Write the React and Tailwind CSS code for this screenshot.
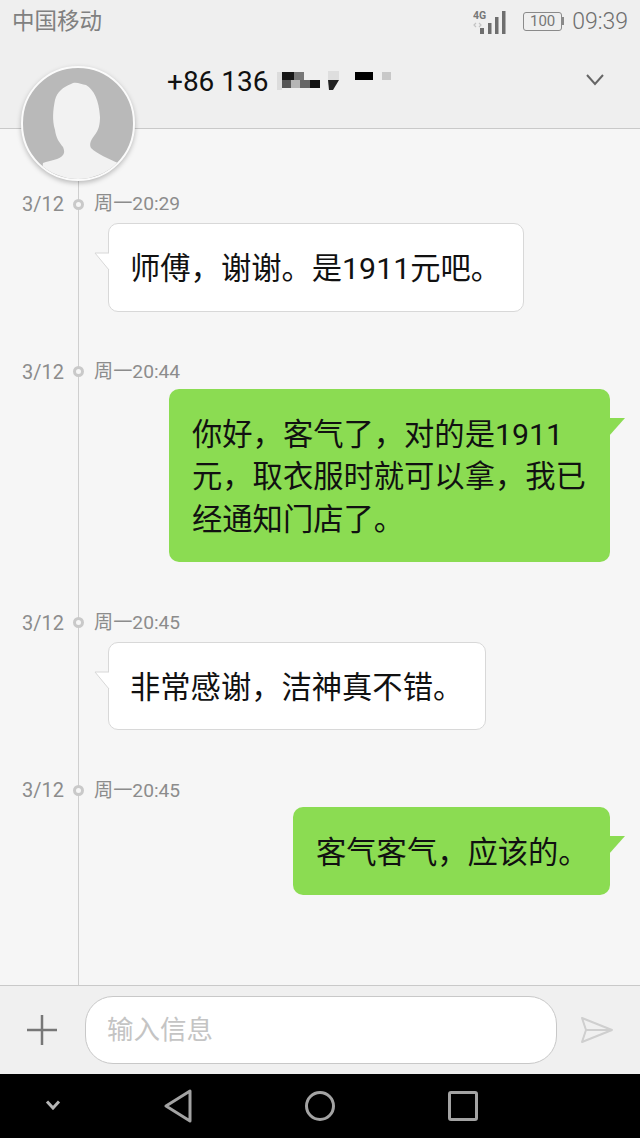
const messages = [
  { id: 1, date: '3/12', time: '周一20:29', side: 'left', width: 'w-[416px]', gap: 'mb-[48px]', lines: ['师傅，谢谢。是1911元吧。'] },
  { id: 2, date: '3/12', time: '周一20:44', side: 'right', width: 'w-[441px]', gap: 'mb-[49px]', lines: ['你好，客气了，对的是1911', '元，取衣服时就可以拿，我已', '经通知门店了。'] },
  { id: 3, date: '3/12', time: '周一20:45', side: 'left', width: 'w-[378px]', gap: 'mb-[48px]', lines: ['非常感谢，洁神真不错。'] },
  { id: 4, date: '3/12', time: '周一20:45', side: 'right', width: 'w-[317px]', gap: 'mb-[48px]', lines: ['客气客气，应该的。'] },
]

function StatusIcons() {
  return (
    <div className="flex items-center">
      <svg width="40" height="26" viewBox="0 0 40 26" className="mr-[10px]">
        <text x="0" y="11" fontSize="10.5" fontWeight="700" fontFamily="Roboto, sans-serif" fill="#777">4G</text>
        <path d="M3 15 l-2 2 2 2 M6 15 l2 2 -2 2" fill="none" stroke="#c4c4c4" strokeWidth="1.2" />
        <rect x="7" y="20" width="4" height="6" fill="#6e6e6e" />
        <rect x="15" y="15" width="3.5" height="11" fill="#6e6e6e" />
        <rect x="22" y="9" width="3.5" height="17" fill="#6e6e6e" />
        <rect x="29" y="3" width="3.5" height="23" fill="#6e6e6e" />
      </svg>
      <div className="flex items-center mr-[8px]">
        <div className="w-[39px] h-[19px] border border-[#8a8a8a] rounded-[3px] flex items-center justify-center text-[15px] leading-none text-[#777]">100</div>
        <div className="w-[2px] h-[8px] bg-[#8a8a8a]" />
      </div>
    </div>
  )
}

function Avatar() {
  return (
    <div className="absolute left-[21px] top-[66px] w-[114px] h-[115px] rounded-full bg-[#b9b9b9] border-2 border-[#fbfbfb] shadow-[0_2px_5px_rgba(0,0,0,0.25)] overflow-hidden z-10">
      <svg width="110" height="111" viewBox="0 0 110 111">
        <path
          d="M48 16 C52 13 58 16 63 17 C71 22 76 32 77 49 C77 56 76 62 71 68 C68 72 66 76 68 80 C74 86 86 91 95 95 L95 111 L18 111 L20 95 C28 92 36 92 40 87 C42 84 41 82 40 79 C36 74 33 70 32 62 C29 52 30 42 32 32 C34 24 40 19 48 16 Z"
          fill="#f2f2f2"
        />
      </svg>
    </div>
  )
}

function Mosaic() {
  return (
    <svg width="122" height="34" viewBox="0 0 122 34" className="ml-[3px]">
      <rect x="5" y="12" width="5" height="18" fill="#dcdcdc" />
      <rect x="10" y="12" width="12" height="8" fill="#161616" />
      <rect x="22" y="12" width="10" height="8" fill="#777" />
      <rect x="10" y="20" width="9" height="8" fill="#555" />
      <rect x="19" y="20" width="9" height="8" fill="#b5b5b5" />
      <rect x="28" y="20" width="10" height="8" fill="#666" />
      <rect x="38" y="20" width="10" height="8" fill="#111" />
      <rect x="56" y="11" width="11" height="9" fill="#dedede" />
      <path d="M56 20 H67 L61 30 H57 Z" fill="#222" />
      <rect x="83" y="12" width="18" height="8" fill="#000" />
      <rect x="110" y="12" width="9" height="8" fill="#c8c8c8" />
    </svg>
  )
}

function Bubble({ msg }) {
  const isLeft = msg.side === 'left'
  return (
    <div className={isLeft ? 'pl-[108px] mt-[7px] flex' : 'pl-[169px] mt-[5px] flex justify-end pr-[30px]'}>
      <div
        className={
          'relative rounded-[10px] text-[30.3px] leading-[42.67px] text-[#111] whitespace-nowrap ' +
          msg.width + ' ' +
          (isLeft ? 'pl-[21px] pr-[22px] pt-[24px] pb-[20px] bg-white border border-[#d8d8d8]' : 'px-[23px] pt-[25px] pb-[20px] bg-[#8bdc52]')
        }
      >
        {msg.lines.map((l) => <div key={l}>{l}</div>)}
        {isLeft ? (
          <svg width="16" height="20" viewBox="0 0 16 20" className="absolute left-[-15px] top-[28px]">
            <path d="M16 1 H1 L16 19 Z" fill="#fff" />
            <path d="M15 1 H1 L15 18" fill="none" stroke="#d8d8d8" />
          </svg>
        ) : (
          <svg width="16" height="20" viewBox="0 0 16 20" className="absolute right-[-15px] top-[29px]">
            <path d="M0 0 H16 L0 18 Z" fill="#8bdc52" />
          </svg>
        )}
      </div>
    </div>
  )
}

function Message({ msg }) {
  return (
    <div className={msg.gap}>
      <div className="flex items-center h-[24px] leading-none text-[#8c8c8c]">
        <div className="w-[73px] pl-[22px] text-[20px]">{msg.date}</div>
        <div className="w-[11px] h-[11px] rounded-full border-[3px] border-[#c9c9c9] bg-[#f6f6f6] z-[1]" />
        <div className="ml-[10px] text-[19.2px]">{msg.time}</div>
      </div>
      <Bubble msg={msg} />
    </div>
  )
}

export default function App() {
  return (
    <div
      className="relative w-[640px] h-[1138px] flex flex-col overflow-hidden bg-[#f6f6f6]"
      style={{ fontFamily: 'Roboto, "Noto Sans CJK SC", sans-serif' }}
    >
      {/* Header */}
      <div className="h-[129px] shrink-0 bg-[#efefef] border-b border-[#c9c9c9]">
        <div className="flex items-center justify-between h-[42px] pl-[12px] pr-[12px]">
          <span className="text-[22.5px] leading-none text-[#808080]">中国移动</span>
          <div className="flex items-center">
            <StatusIcons />
            <span className="text-[23px] leading-none font-light text-[#6e6e6e]">09:39</span>
          </div>
        </div>
        <div className="flex items-start justify-between pl-[167px] pr-[35px] pt-[18px]">
          <div className="flex items-start">
            <span className="text-[28px] leading-[44px] text-[#111]">+86 136</span>
            <Mosaic />
          </div>
          <svg width="20" height="14" viewBox="0 0 20 14" className="mt-[13px]">
            <path d="M2 2 L10 11 L18 2" fill="none" stroke="#666" strokeWidth="2" />
          </svg>
        </div>
      </div>
      <Avatar />

      {/* Conversation */}
      <div className="relative flex-1 pt-[63px]">
        <div className="absolute left-[78px] top-0 bottom-0 w-px bg-[#cfcfcf]" />
        {messages.map((m) => <Message key={m.id} msg={m} />)}
      </div>

      {/* Input */}
      <div className="h-[89px] shrink-0 bg-[#f0f0f0] border-t border-[#c9c9c9] flex items-center pl-[26px]">
        <svg width="32" height="32" viewBox="0 0 32 32">
          <path d="M1 16 H31 M16 1 V31" stroke="#777" strokeWidth="2.5" />
        </svg>
        <div className="w-[472px] h-[68px] ml-[27px] rounded-[28px] bg-white border border-[#c8c8c8] flex items-center pl-[21px] text-[26.5px] text-[#c4c4c4]">
          输入信息
        </div>
        <svg width="34" height="28" viewBox="0 0 34 28" className="ml-[23px]">
          <path d="M2 2 L32 14 L2 26 L6 14 Z M6 14 H32" fill="none" stroke="#cfcfcf" strokeWidth="2" strokeLinejoin="round" />
        </svg>
      </div>

      {/* Navigation bar */}
      <div className="h-[64px] shrink-0 bg-black flex items-center pl-[45px]">
        <svg width="16" height="10" viewBox="0 0 16 10" className="mt-[-2px]">
          <path d="M2 1.5 L8 8 L14 1.5" fill="none" stroke="#b5b5b5" strokeWidth="3" />
        </svg>
        <svg width="30" height="34" viewBox="0 0 30 34" className="ml-[102px]">
          <path d="M27 2 V32 L3 17 Z" fill="none" stroke="#a3a3a3" strokeWidth="3" strokeLinejoin="round" />
        </svg>
        <svg width="32" height="32" viewBox="0 0 32 32" className="ml-[111px]">
          <circle cx="16" cy="16" r="13.5" fill="none" stroke="#a3a3a3" strokeWidth="3" />
        </svg>
        <svg width="30" height="30" viewBox="0 0 30 30" className="ml-[112px]">
          <rect x="1.5" y="1.5" width="27" height="27" rx="1.5" fill="none" stroke="#a3a3a3" strokeWidth="3" />
        </svg>
      </div>
    </div>
  )
}
